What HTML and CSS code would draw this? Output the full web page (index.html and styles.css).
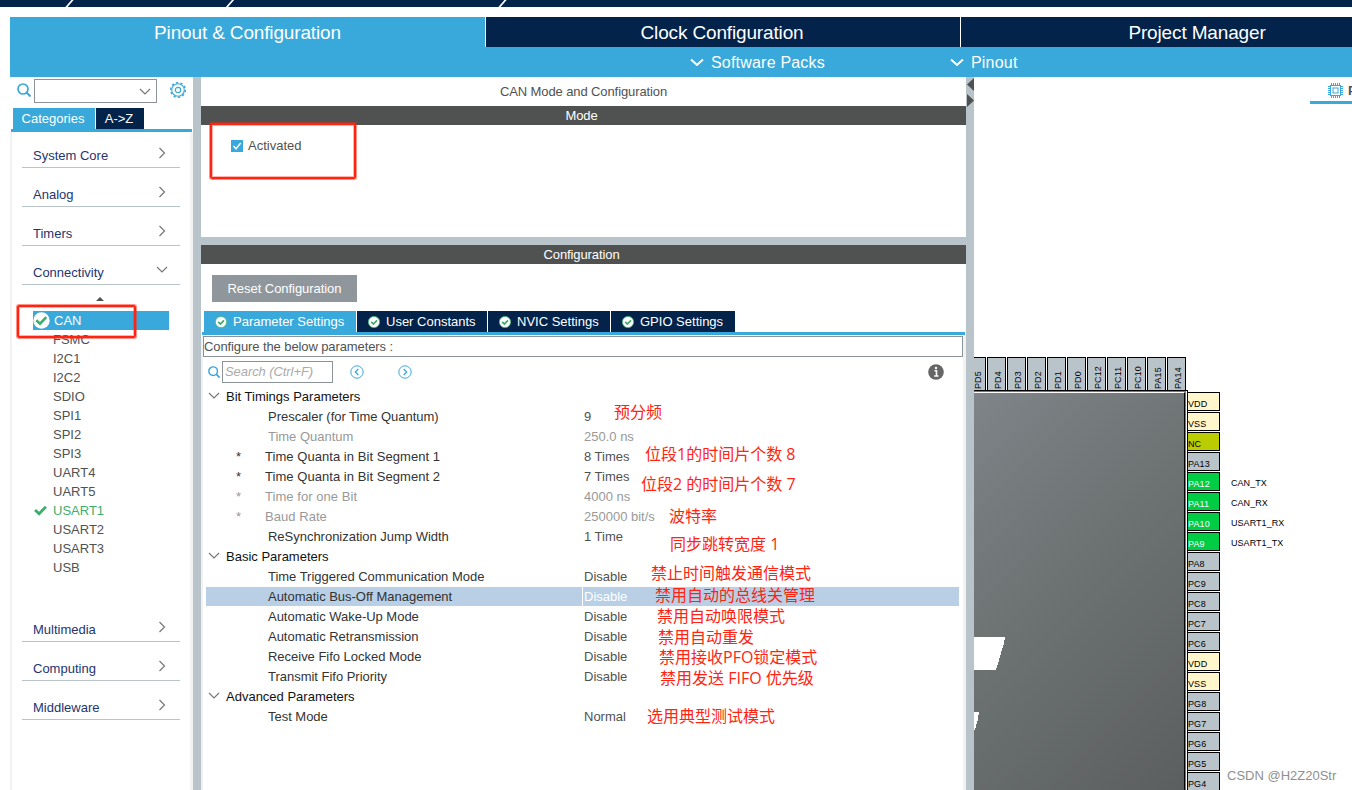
FILE: index.html
```
<!DOCTYPE html>
<html lang="zh-CN">
<head>
    <meta charset="UTF-8">
    <meta name="viewport" content="width=device-width, initial-scale=1.0">
    <title>Pinout &amp; Configuration</title>
    <link rel="stylesheet" href="styles.css">
</head>
<body>
    <!-- Shared icons -->
    <svg class="sprite" width="0" height="0">
        <symbol id="search" viewBox="0 0 14 14"><circle cx="6" cy="6" r="5" fill="none" stroke="#39a9dc" stroke-width="1.7"/><path d="M9.5 9.5L13.5 13.5" stroke="#39a9dc" stroke-width="2"/></symbol>
        <symbol id="right" viewBox="0 0 8 12"><path d="M1.5 1L6.5 6L1.5 11" fill="none" stroke="#777" stroke-width="1.2"/></symbol>
        <symbol id="down" viewBox="0 0 12 8"><path d="M1 1L6 6L11 1" fill="none" stroke="#777" stroke-width="1.2"/></symbol>
        <symbol id="ok" viewBox="0 0 12 12"><circle cx="6" cy="6" r="5.6" fill="#fff" stroke="#4eb978" stroke-width=".8"/><path d="M3.2 5.8L5.4 8L9 4.4" fill="none" stroke="#3fa868" stroke-width="1.7"/></symbol>
        <symbol id="tick" viewBox="0 0 12 10"><path d="M1 4.5L4.7 8L11 1.5" fill="none" stroke="#3fae6a" stroke-width="2.6"/></symbol>
    </svg>

    <div class="breadcrumb">
        <svg width="1352" height="7"><path d="M66 7.5L73 -.5M226.500 7.500L233.500 -.5M499 7.500L506 -.5" stroke="#fff" stroke-width="1.7"/></svg>
    </div>

    <div class="main-tabs">
        <div class="main-tab active">Pinout &amp; Configuration</div>
        <div class="main-tab clock">Clock Configuration</div>
        <div class="main-tab project">Project Manager</div>
    </div>
    <div class="sub-bar">
        <div class="sub-item packs"><svg width="14" height="9" viewBox="0 0 14 9"><path d="M1 1.500L7 7L13 1.500" fill="none" stroke="#fff" stroke-width="2"/></svg><span>Software Packs</span></div>
        <div class="sub-item"><svg width="14" height="9" viewBox="0 0 14 9"><path d="M1 1.500L7 7L13 1.500" fill="none" stroke="#fff" stroke-width="2"/></svg><span>Pinout</span></div>
    </div>

    <div class="workspace">
        <!-- Peripheral list -->
        <div class="sidebar">
            <div class="side-search">
                <svg class="side-glass" width="14" height="14"><use href="#search"/></svg>
                <div class="combo"><svg width="12" height="8"><use href="#down"/></svg></div>
                <svg class="gear" width="18" height="18" viewBox="0 0 18 18" fill="none" stroke="#39a9dc"><circle cx="9" cy="9" r="6.300" stroke-width="1.100"/><circle cx="9" cy="9" r="7.300" stroke-width="1.500" stroke-dasharray="2.293 2.293"/><circle cx="9" cy="9" r="2.700" stroke-width="1.200"/></svg>
            </div>
            <div class="side-tabs"><div class="side-tab on">Categories</div><div class="side-tab">A-&gt;Z</div></div>
            <div class="categories">
                <div class="category"><span>System Core</span><svg width="8" height="12"><use href="#right"/></svg></div>
                <div class="category"><span>Analog</span><svg width="8" height="12"><use href="#right"/></svg></div>
                <div class="category"><span>Timers</span><svg width="8" height="12"><use href="#right"/></svg></div>
                <div class="category open"><span>Connectivity</span><svg width="12" height="8"><use href="#down"/></svg></div>
                <div class="sorter"></div>
                <div class="periph-list">
                    <div class="periph selected"><svg width="17" height="17" viewBox="0 0 17 17"><circle cx="8.500" cy="8.500" r="8.200" fill="#fff"/><path d="M3.300 8.300L7 11.700L13.300 5.200" fill="none" stroke="#3fae6a" stroke-width="2.600"/></svg><span>CAN</span></div>
                    <div class="periph">FSMC</div>
                    <div class="periph">I2C1</div>
                    <div class="periph">I2C2</div>
                    <div class="periph">SDIO</div>
                    <div class="periph">SPI1</div>
                    <div class="periph">SPI2</div>
                    <div class="periph">SPI3</div>
                    <div class="periph">UART4</div>
                    <div class="periph">UART5</div>
                    <div class="periph enabled"><svg width="13" height="11"><use href="#tick"/></svg><span>USART1</span></div>
                    <div class="periph">USART2</div>
                    <div class="periph">USART3</div>
                    <div class="periph">USB</div>
                </div>
                <div class="category"><span>Multimedia</span><svg width="8" height="12"><use href="#right"/></svg></div>
                <div class="category"><span>Computing</span><svg width="8" height="12"><use href="#right"/></svg></div>
                <div class="category"><span>Middleware</span><svg width="8" height="12"><use href="#right"/></svg></div>
            </div>
        </div>
        <div class="splitter"></div>

        <!-- Mode and configuration -->
        <div class="center">
            <div class="panel-title">CAN Mode and Configuration</div>
            <div class="bar">Mode</div>
            <div class="mode">
                <svg width="12" height="12"><rect width="12" height="12" fill="#39a9dc"/><path d="M2.500 6L5 8.800L9.700 3" fill="none" stroke="#fff" stroke-width="1.400"/></svg>
                <span>Activated</span>
            </div>
            <div class="h-splitter"></div>
            <div class="bar">Configuration</div>
            <div class="reset">Reset Configuration</div>
            <div class="cfg-tabs">
                <div class="cfg-tab current"><svg width="12" height="12"><use href="#ok"/></svg>Parameter Settings</div>
                <div class="cfg-tab user"><svg width="12" height="12"><use href="#ok"/></svg>User Constants</div>
                <div class="cfg-tab nvic"><svg width="12" height="12"><use href="#ok"/></svg>NVIC Settings</div>
                <div class="cfg-tab gpio"><svg width="12" height="12"><use href="#ok"/></svg>GPIO Settings</div>
            </div>
            <div class="cfg-body">
                <div class="hint">Configure the below parameters :</div>
                <div class="find">
                    <svg width="12" height="12" viewBox="0 0 14 14"><use href="#search"/></svg>
                    <div class="find-box">Search (Ctrl+F)</div>
                    <svg class="prev" width="14" height="14" viewBox="0 0 14 14" fill="none" stroke="#39a9dc"><circle cx="7" cy="7" r="6.200"/><path d="M8.300 4L5.300 7L8.300 10" stroke-width="1.300"/></svg>
                    <svg class="next" width="14" height="14" viewBox="0 0 14 14" fill="none" stroke="#39a9dc"><circle cx="7" cy="7" r="6.200"/><path d="M5.700 4L8.700 7L5.700 10" stroke-width="1.300"/></svg>
                    <svg class="info" width="16" height="16"><circle cx="8" cy="8" r="7.800" fill="#666"/><path d="M6.500 6.700H8.500V12M6.200 12H10.500" fill="none" stroke="#fff" stroke-width="1.600"/><circle cx="8" cy="4" r="1.200" fill="#fff"/></svg>
                </div>
                <div class="params">
                    <div class="group"><svg width="12" height="8"><use href="#down"/></svg>Bit Timings Parameters</div>
                    <div class="param"><i></i><b>Prescaler (for Time Quantum)</b><em>9</em></div>
                    <div class="param off"><i></i><b>Time Quantum</b><em>250.0 ns</em></div>
                    <div class="param star"><i>*</i><b>Time Quanta in Bit Segment 1</b><em>8 Times</em></div>
                    <div class="param star"><i>*</i><b>Time Quanta in Bit Segment 2</b><em>7 Times</em></div>
                    <div class="param star off"><i>*</i><b>Time for one Bit</b><em>4000 ns</em></div>
                    <div class="param star off"><i>*</i><b>Baud Rate</b><em>250000 bit/s</em></div>
                    <div class="param"><i></i><b>ReSynchronization Jump Width</b><em>1 Time</em></div>
                    <div class="group"><svg width="12" height="8"><use href="#down"/></svg>Basic Parameters</div>
                    <div class="param"><i></i><b>Time Triggered Communication Mode</b><em>Disable</em></div>
                    <div class="param picked"><i></i><b>Automatic Bus-Off Management</b><em>Disable</em></div>
                    <div class="param"><i></i><b>Automatic Wake-Up Mode</b><em>Disable</em></div>
                    <div class="param"><i></i><b>Automatic Retransmission</b><em>Disable</em></div>
                    <div class="param"><i></i><b>Receive Fifo Locked Mode</b><em>Disable</em></div>
                    <div class="param"><i></i><b>Transmit Fifo Priority</b><em>Disable</em></div>
                    <div class="group"><svg width="12" height="8"><use href="#down"/></svg>Advanced Parameters</div>
                    <div class="param"><i></i><b>Test Mode</b><em>Normal</em></div>
                </div>
            </div>
        </div>
        <div class="splitter grips"><svg width="8" height="32"><path d="M8 1V14L1 7.500ZM1 17V30L8 23.500Z" fill="#505251"/></svg></div>

        <!-- Pinout view -->
        <div class="pinout">
            <div class="view-tab">
                <svg width="15" height="15" fill="none" stroke="#39a9dc"><rect x="2.500" y="2.500" width="10" height="10"/><rect x="5" y="5" width="5" height="5"/><path d="M3.500 0V2M5.500 0V2M7.500 0V2M9.500 0V2M11.500 0V2M3.500 13V15M5.500 13V15M7.500 13V15M9.500 13V15M11.500 13V15M0 3.500H2M0 5.500H2M0 7.500H2M0 9.500H2M0 11.500H2M13 3.500H15M13 5.500H15M13 7.500H15M13 9.500H15M13 11.500H15"/></svg>
                <span>Pinout view</span>
            </div>
            <div class="top-pins">
                <div class="vpin"><span>PD5</span></div>
                <div class="vpin"><span>PD4</span></div>
                <div class="vpin"><span>PD3</span></div>
                <div class="vpin"><span>PD2</span></div>
                <div class="vpin"><span>PD1</span></div>
                <div class="vpin"><span>PD0</span></div>
                <div class="vpin"><span>PC12</span></div>
                <div class="vpin"><span>PC11</span></div>
                <div class="vpin"><span>PC10</span></div>
                <div class="vpin"><span>PA15</span></div>
                <div class="vpin"><span>PA14</span></div>
            </div>
            <div class="chip-row">
                <div class="chip">
                    <div class="chip-face"><svg width="32" height="398"><path d="M0 244H31L30 250L22 277H0ZM0 319H5L4 326L1 337H0Z" fill="#fff" shape-rendering="crispEdges"/></svg></div>
                </div>
                <div class="side-pins">
                    <div class="pin-row"><div class="pin power">VDD</div></div>
                    <div class="pin-row"><div class="pin power">VSS</div></div>
                    <div class="pin-row"><div class="pin nc">NC</div></div>
                    <div class="pin-row"><div class="pin">PA13</div></div>
                    <div class="pin-row"><div class="pin used">PA12</div><span>CAN_TX</span></div>
                    <div class="pin-row"><div class="pin used">PA11</div><span>CAN_RX</span></div>
                    <div class="pin-row"><div class="pin used">PA10</div><span>USART1_RX</span></div>
                    <div class="pin-row"><div class="pin used">PA9</div><span>USART1_TX</span></div>
                    <div class="pin-row"><div class="pin">PA8</div></div>
                    <div class="pin-row"><div class="pin">PC9</div></div>
                    <div class="pin-row"><div class="pin">PC8</div></div>
                    <div class="pin-row"><div class="pin">PC7</div></div>
                    <div class="pin-row"><div class="pin">PC6</div></div>
                    <div class="pin-row"><div class="pin power">VDD</div></div>
                    <div class="pin-row"><div class="pin power">VSS</div></div>
                    <div class="pin-row"><div class="pin">PG8</div></div>
                    <div class="pin-row"><div class="pin">PG7</div></div>
                    <div class="pin-row"><div class="pin">PG6</div></div>
                    <div class="pin-row"><div class="pin">PG5</div></div>
                    <div class="pin-row"><div class="pin">PG4</div></div>
                </div>
            </div>
        </div>
    </div>

    <!-- Notes laid over the window -->
    <div class="frame frame-mode"></div>
    <div class="frame frame-can"></div>
    <div class="note n1">预分频</div>
    <div class="note n2">位段1的时间片个数 8</div>
    <div class="note n3">位段2 的时间片个数 7</div>
    <div class="note n4">波特率</div>
    <div class="note n5">同步跳转宽度 1</div>
    <div class="note n6">禁止时间触发通信模式</div>
    <div class="note n7">禁用自动的总线关管理</div>
    <div class="note n8">禁用自动唤限模式</div>
    <div class="note n9">禁用自动重发</div>
    <div class="note n10">禁用接收PFO锁定模式</div>
    <div class="note n11">禁用发送 FIFO 优先级</div>
    <div class="note n12">选用典型测试模式</div>
    <div class="watermark">CSDN @H2Z20Str</div>
</body>
</html>
```
FILE: styles.css
```
* {
    box-sizing: border-box;
}

body {
    position: relative;
    margin: 0;
    width: 1352px;
    height: 790px;
    overflow: hidden;
    background: #fff;
    color: #505251;
    font-family: "Liberation Sans", "Noto Sans CJK SC", sans-serif;
    font-size: 13px;
    white-space: nowrap;
}

svg {
    display: block;
    flex-shrink: 0;
}

.sprite {
    position: absolute;
}

.breadcrumb {
    height: 7px;
    background: #03234b;
}

/* Top tabs */
.main-tabs {
    display: flex;
    margin: 10px 0 0 10px;
    gap: 1px;
    height: 30px;
    overflow: hidden;
}

.main-tab {
    flex: 0 0 474px;
    background: #03234b;
    color: #fff;
    font-size: 19px;
    line-height: 31px;
    text-align: center;
    letter-spacing: -0.15px;
}

.main-tab.clock,
.main-tab.project {
    padding-right: 2px;
}

.main-tab.active {
    flex-basis: 475px;
    background: #39a9dc;
}

.sub-bar {
    display: flex;
    gap: 125px;
    margin-left: 10px;
    padding-left: 680px;
    height: 30px;
    background: #39a9dc;
    color: #fff;
    font-size: 16px;
    line-height: 31px;
    letter-spacing: 0.2px;
}

.sub-item {
    display: flex;
    align-items: center;
    gap: 7px;
}

.workspace {
    display: flex;
    height: 713px;
    padding-left: 10px;
}

.splitter {
    width: 8px;
    background: #b9c4ca;
}

/* Sidebar */
.sidebar {
    width: 183px;
}

.side-search {
    display: flex;
    height: 31px;
    padding: 2px 0 0 7px;
}

.side-glass {
    margin: 4px 3px 0 0;
}

.combo {
    display: flex;
    justify-content: flex-end;
    align-items: center;
    width: 123px;
    height: 24px;
    padding: 2px 5px 0 0;
    border: 1px solid #8c9499;
}

.gear {
    margin: 2px 0 0 12px;
}

.side-tabs {
    display: flex;
    gap: 1px;
    margin: 0 1px;
    padding-left: 2px;
    height: 24px;
    border-bottom: 3px solid #39a9dc;
}

.side-tab {
    width: 48px;
    padding-right: 2px;
    background: #03234b;
    color: #fff;
    font-size: 13px;
    line-height: 21px;
    text-align: center;
}

.side-tab.on {
    width: 82px;
    background: #39a9dc;
}

.categories {
    height: 658px;
    border: solid #f2f2f2;
    border-width: 0 3px 0 2px;
    padding: 0 10px;
}

.category {
    display: flex;
    justify-content: space-between;
    align-items: center;
    height: 39px;
    padding: 15px 14px 0 11px;
    border-bottom: 1px solid #b9c4ca;
    color: #24356e;
    font-size: 13px;
}

.category:first-child {
    height: 36px;
    padding-top: 12px;
}

.category svg {
    margin-top: -5px;
}

.category.open {
    padding-right: 12px;
}

.sorter {
    width: 8px;
    height: 4px;
    margin: 12px 0 0 74px;
    border: 4px solid transparent;
    border-top: 0;
    border-bottom-color: #505251;
}

.periph-list {
    margin: 10px 11px 26px;
}

.periph {
    height: 19px;
    padding-left: 20px;
    font-size: 13px;
    line-height: 19px;
}

.periph.selected,
.periph.enabled {
    display: flex;
    align-items: center;
}

.periph.selected {
    gap: 4px;
    padding-left: 0;
    background: #39a9dc;
    color: #fff;
}

.periph.enabled {
    gap: 6px;
    padding-left: 1px;
    color: #3fae6a;
}

/* Center panel */
.center {
    width: 765px;
}

.panel-title {
    height: 29px;
    font-size: 13px;
    line-height: 29px;
    text-align: center;
    letter-spacing: -0.1px;
}

.bar {
    height: 19px;
    background: #505251;
    color: #fff;
    font-size: 13px;
    line-height: 19px;
    text-align: center;
    letter-spacing: -0.1px;
    padding-right: 4px;
}

.mode {
    display: flex;
    gap: 5px;
    height: 112px;
    padding: 15px 0 0 30px;
    line-height: 12px;
}

.h-splitter {
    height: 8px;
    background: #b9c4ca;
}

.reset {
    width: 145px;
    height: 27px;
    margin: 11px 0 9px 11px;
    background: #90979c;
    color: #fff;
    font-size: 13px;
    line-height: 27px;
    text-align: center;
    letter-spacing: -0.05px;
}

.cfg-tabs {
    display: flex;
    gap: 1px;
    height: 24px;
    margin: 0 1px;
    padding-left: 2px;
    border-bottom: 3px solid #39a9dc;
}

.cfg-tab {
    display: flex;
    align-items: center;
    gap: 6px;
    padding-left: 11px;
    background: #03234b;
    color: #fff;
    font-size: 13px;
}

.cfg-tab.current {
    width: 152px;
    background: #39a9dc;
}

.cfg-tab.user {
    width: 130px;
}

.cfg-tab.nvic {
    width: 122px;
}

.cfg-tab.gpio {
    width: 124px;
}

.cfg-body {
    height: 455px;
    padding-top: 1px;
    border: solid #f2f2f2;
    border-width: 0 3px 0 2px;
}

.hint {
    height: 21px;
    border: 1px solid #8c9499;
    font-size: 13px;
    line-height: 19px;
    letter-spacing: -0.1px;
}

.find {
    display: flex;
    align-items: center;
    height: 30px;
    padding: 0 19px 0 5px;
}

.find-box {
    width: 111px;
    height: 22px;
    margin-left: 2px;
    padding-left: 2px;
    border: 1px solid #8c9499;
    color: #aaa;
    font-style: italic;
    line-height: 20px;
    letter-spacing: -0.08px;
}

.prev {
    margin-left: 17px;
}

.next {
    margin-left: 34px;
}

.info {
    margin-left: auto;
}

.params {
    margin: 0 4px 0 3px;
}

.group {
    display: flex;
    align-items: center;
    gap: 6px;
    height: 20px;
    padding: 0 0 2px 2px;
    color: #111;
}

.param {
    display: flex;
    height: 20px;
    padding-bottom: 1px;
    line-height: 19px;
}

.param i,
.param b,
.param em {
    font-style: normal;
    font-weight: normal;
}

.param i {
    width: 62px;
    padding-left: 30px;
    color: #333;
}

.param b {
    width: 314px;
    color: #333;
    letter-spacing: -0.02px;
}

.param em {
    flex: 1;
    padding-left: 2px;
}

.param.star i {
    width: 59px;
}

.param.star b {
    width: 317px;
    letter-spacing: 0.05px;
}

.param.off i,
.param.off b,
.param.off em {
    color: #999;
}

.param.picked i,
.param.picked b,
.param.picked em {
    background: #b8cfe6;
}

.param.picked em {
    padding-left: 1px;
    margin-left: 1px;
    color: #fff;
}

/* Pinout view */
.pinout {
    flex: 1;
    overflow: hidden;
}

.view-tab {
    display: flex;
    gap: 5px;
    width: 130px;
    height: 27px;
    margin-left: 336px;
    padding: 6px 0 0 18px;
    border-bottom: 3px solid #39a9dc;
    font-size: 13px;
    font-weight: bold;
}

.top-pins {
    display: flex;
    gap: 1px;
    margin: 253px 0 0 -7px;
    height: 33px;
}

.vpin {
    flex: 0 0 19px;
    width: 19px;
    padding-left: 4px;
    border: 1px solid #000;
    border-bottom: 0;
    background: #b9c4ca;
    color: #000;
    font-size: 9px;
}

.vpin span {
    display: block;
    width: 13px;
    height: 31px;
    writing-mode: vertical-rl;
    transform: rotate(180deg);
    line-height: 13px;
    letter-spacing: 0.1px;
}

.chip-row {
    display: flex;
}

.chip {
    width: 214px;
    height: 400px;
    border-top: 1px solid #000;
    background: linear-gradient(90deg, #777 212px, #fff 212px 213px, #000 213px);
}

.chip-face {
    width: 211px;
    height: 398px;
    margin-top: 1px;
    border-top: 1px solid #fff;
    border-right: 1px solid #000;
    background: linear-gradient(135deg, #7e8488 0%, #6b7070 50%, #5b5f5f 100%);
}

.side-pins {
    display: flex;
    flex-direction: column;
    gap: 1px;
    padding-top: 2px;
}

.pin-row {
    display: flex;
    gap: 11px;
    height: 19px;
    color: #000;
    font-size: 9px;
    line-height: 23px;
    letter-spacing: 0.05px;
}

.pin {
    width: 32px;
    height: 19px;
    border: 1px solid #000;
    border-left: 0;
    background: #b9c4ca;
    line-height: 22px;
    letter-spacing: 0.1px;
}

.pin.power {
    background: #fff6cc;
}

.pin.nc {
    background: #bbcc00;
}

.pin.used {
    background: #00cc44;
    color: #fff;
}

/* Overlaid notes */
.frame {
    position: absolute;
    border: 2px solid #ff2412;
    border-radius: 2px;
    box-shadow: 0 0 0 1px rgba(255, 36, 18, 0.5), inset 0 0 0 1px rgba(255, 36, 18, 0.35);
}

.frame-mode {
    left: 210px;
    top: 123px;
    width: 146px;
    height: 56px;
}

.frame-can {
    left: 17px;
    top: 305px;
    width: 119px;
    height: 33px;
}

.note {
    position: absolute;
    color: #ff2412;
    font-family: "Open Sans", "Noto Sans CJK SC", sans-serif;
    font-size: 16px;
    line-height: 20px;
}

.n1 { left: 614px; top: 402px; }
.n2 { left: 645px; top: 444px; }
.n3 { left: 641px; top: 474px; }
.n4 { left: 669px; top: 506px; }
.n5 { left: 670px; top: 534px; }
.n6 { left: 651px; top: 563px; }
.n7 { left: 655px; top: 585px; }
.n8 { left: 657px; top: 606px; }
.n9 { left: 658px; top: 627px; }
.n10 { left: 659px; top: 647px; }
.n11 { left: 660px; top: 668px; }
.n12 { left: 647px; top: 706px; }

.watermark {
    position: absolute;
    left: 1227px;
    top: 768px;
    color: #8f8f8f;
    font-size: 13px;
    line-height: 15px;
}
```
